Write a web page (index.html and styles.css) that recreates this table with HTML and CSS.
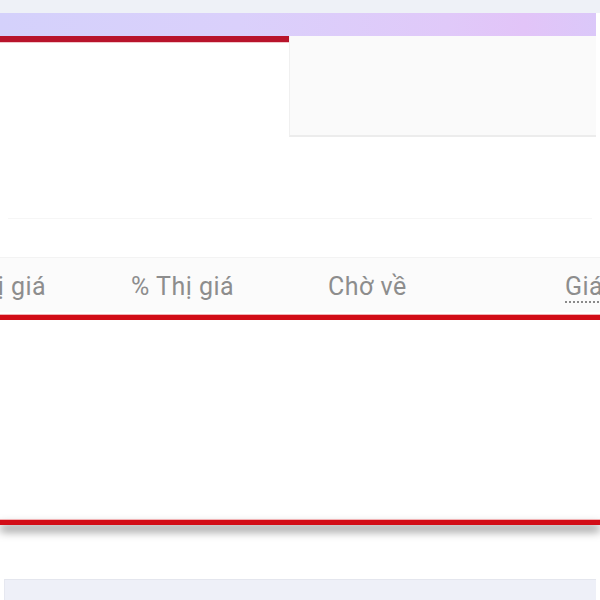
FILE: index.html
```html
<!DOCTYPE html>
<html lang="vi">
<head>
<meta charset="utf-8">
<link rel="stylesheet" href="styles.css">
</head>
<body>
<div class="page">
  <div class="topgap"></div>
  <div class="band"></div>
  <div class="upper">
    <div class="left">
      <div class="redbar"></div>
    </div>
    <div class="panel"></div>
  </div>
  <div class="spacer1"></div>
  <div class="faint"></div>
  <div class="spacer2"></div>
  <div class="table">
    <div class="thead">
      <div class="cols">
        <div class="col c1">Thị giá</div>
        <div class="col c2">% Thị giá</div>
        <div class="col c3">Chờ về</div>
        <div class="col c4"><span class="dotted">Giá vốn</span></div>
      </div>
    </div>
    <div class="redline"></div>
    <div class="tbody"></div>
    <div class="redline bottom"></div>
  </div>
  <div class="spacer3"></div>
  <div class="footer"></div>
</div>
</body>
</html>
```
FILE: styles.css
```css
html, body {
  margin: 0;
  padding: 0;
  background: #ffffff;
  overflow: hidden;
}
.page {
  width: 600px;
  height: 600px;
  display: flex;
  flex-direction: column;
  font-family: Roboto, "Noto Sans", sans-serif;
  overflow: hidden;
}
.topgap {
  height: 13px;
  background: #eef1f7;
  flex: none;
}
.band {
  height: 23px;
  flex: none;
  margin-right: 4px;
  background: linear-gradient(90deg, #d4d1fb 0%, #dad0fb 40%, #e0c9f9 75%, #e2c4f8 88%, #dbc8f9 100%);
}
.upper {
  display: flex;
  height: 101px;
  flex: none;
}
.left {
  width: 289px;
  flex: none;
}
.redbar {
  height: 6px;
  background: #b8142c;
  border-bottom: 1px solid #f1c7cc;
}
.panel {
  flex: 1;
  margin-right: 4px;
  background: #fafafa;
  border-left: 1px solid #f0f0f0;
  border-bottom: 2px solid #ececec;
}
.spacer1 {
  height: 81px;
  flex: none;
}
.faint {
  height: 1px;
  background: #f6f6f6;
  margin: 0 8px;
  flex: none;
}
.spacer2 {
  height: 38px;
  flex: none;
}
.thead {
  height: 54px;
  background: #fbfbfb;
  border-top: 1px solid #f3f3f3;
  overflow: hidden;
  display: flex;
  align-items: flex-end;
}
.cols {
  display: flex;
  margin-left: -32px;
  padding-bottom: 11px;
  white-space: nowrap;
}
.col {
  font-size: 25px;
  letter-spacing: 0.5px;
  color: #8d8d8d;
  line-height: 28px;
  flex: none;
}
.c1 { width: 163px; }
.c2 { width: 197px; }
.c3 { width: 237px; }
.dotted {
  border-bottom: 2px dotted #8a8a8a;
}
.redline {
  height: 5px;
  margin-top: 2px;
  background: #d20d17;
  border-top: 1px solid #f2b2b4;
}
.tbody {
  height: 199px;
}
.redline.bottom {
  margin-top: 0;
  box-shadow: 0 6px 10px rgba(0,0,0,0.5);
}
.spacer3 {
  height: 54px;
  flex: none;
}
.footer {
  height: 20px;
  flex: none;
  margin: 0 4px 0 4px;
  background: #eef0f8;
  border-top: 1px solid #e4e6ee;
  border-left: 1px solid #e6e8f0;
}
```
